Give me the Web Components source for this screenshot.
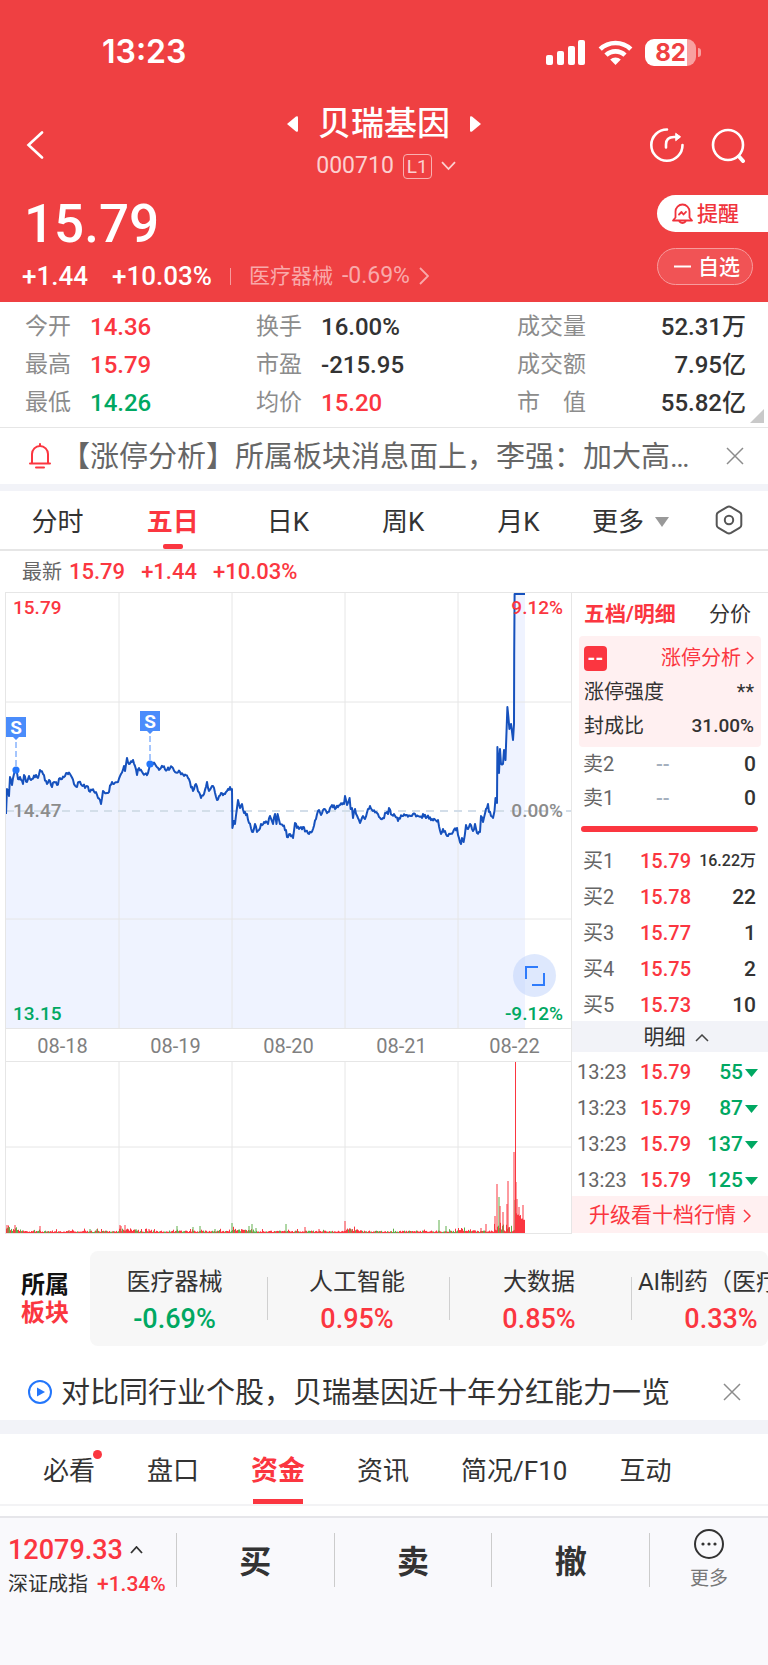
<!DOCTYPE html>
<html lang="zh-CN">
<head>
<meta charset="utf-8">
<meta name="viewport" content="width=device-width, initial-scale=1">
<title>贝瑞基因 000710</title>
<style>
html {
  background: #f9f9fc;
}
body {
  margin: 0;
  font-family: Roboto, "Noto Sans CJK SC", sans-serif;
  color: #333;
  --up: #fb3640;
  --down: #00a862;
  --line: #e6e6e6;
  --band: #f2f3f8;
  --muted: #8c8c8c;
}
</style>
</head>
<body>
<stock-page></stock-page>

<script>
// every element clones its template into an open shadow root
function define(name, html, setup) {
  const template = document.createElement('template');
  template.innerHTML = `
<style>
*, *::before { box-sizing: border-box; }
:host { display: block; }
button { all: unset; box-sizing: border-box; cursor: pointer; }
a { color: inherit; text-decoration: none; }
svg { display: block; flex: none; }
.up { color: var(--up); }
.down { color: var(--down); }
</style>` + html;

  customElements.define(name, class extends HTMLElement {
    constructor() {
      super();
      this.attachShadow({ mode: 'open' });
      this.shadowRoot.appendChild(template.content.cloneNode(true));
      if (setup) setup(this.shadowRoot, this);
    }
  });
}

/* ---------- status bar ---------- */
define('status-bar', `
<style>
:host {
  display: flex;
  justify-content: space-between;
  align-items: center;
  padding: 36px 72px 0 102px;
  font: 600 32px/32px Inter, sans-serif;
  color: #fff;
}
.icons { display: flex; align-items: center; gap: 12px; }
.battery {
  position: relative;
  width: 51px;
  height: 27px;
  border-radius: 9px;
  background: linear-gradient(90deg, #fff 42px, #f8a0a0 42px);
  color: #ef4042;
  font-size: 24px;
  font-weight: 700;
  line-height: 27px;
  text-align: center;
}
.battery::after {
  content: "";
  position: absolute;
  left: 53px;
  top: 9px;
  width: 3px;
  height: 9px;
  border-radius: 0 4px 4px 0;
  background: #f8a0a0;
}
</style>
<span>13:23</span>
<div class="icons">
  <svg width="40" height="25" viewBox="0 0 40 25" fill="#fff">
    <rect x="0" y="15" width="7" height="10" rx="2"/>
    <rect x="11" y="11" width="7" height="14" rx="2"/>
    <rect x="22" y="6" width="7" height="19" rx="2"/>
    <rect x="32" y="0" width="7" height="25" rx="2"/>
  </svg>
  <svg width="35" height="25" viewBox="0 0 35 25">
    <g fill="none" stroke="#fff" stroke-width="4.6">
      <path d="M2.2 9.2a22 22 0 0 1 30.6 0"/>
      <path d="M8 15.2a13.6 13.6 0 0 1 19 0"/>
    </g>
    <path d="M12.2 19.6a7.6 7.6 0 0 1 10.6 0L17.5 25z" fill="#fff"/>
  </svg>
  <div class="battery">82</div>
</div>`);

/* ---------- red header ---------- */
define('quote-header', `
<style>
:host { background: #ef4042; color: #fff; }
nav {
  display: grid;
  grid-template-columns: 1fr auto 1fr;
  align-items: center;
  padding: 36px 22px 0;
}
.back { padding: 4px 0 0 4px; }
.title { display: flex; align-items: center; justify-content: center; gap: 19px; }
h1 { margin: 0; font-size: 33px; line-height: 40px; font-weight: 500; }
.code {
  display: flex;
  align-items: center;
  justify-content: center;
  gap: 9px;
  margin-top: 6px;
  padding-left: 4px;
  font-size: 23px;
  line-height: 32px;
  color: #fcd0d0;
}
.level {
  border: 1px solid #f9b0b0;
  border-radius: 4px;
  padding: 0 3px;
  font-size: 19px;
  line-height: 23px;
}
.tools { display: flex; justify-content: flex-end; gap: 26px; padding-top: 3px; }
.quote { display: flex; justify-content: space-between; padding: 10px 0 6px 22px; }
.price { padding-left: 2px; font-size: 53px; line-height: 64px; font-weight: 500; }
.change { display: flex; align-items: center; font-size: 26px; line-height: 40px; font-weight: 500; }
.change span + span { margin-left: 24px; }
.change i { width: 1px; height: 17px; margin: 0 18px; background: #f79c9d; }
.change a {
  display: flex;
  align-items: center;
  gap: 9px;
  font-size: 21px;
  font-weight: 400;
  color: #f9a9aa;
}
.change b { font-weight: 400; font-size: 23px; }
.actions { display: flex; flex-direction: column; gap: 16px; padding-top: 3px; }
.actions button {
  display: flex;
  align-items: center;
  height: 37px;
  padding-bottom: 3px;
  font-size: 21px;
  font-weight: 500;
}
.remind {
  width: 111px;
  padding-left: 15px;
  gap: 4px;
  border-radius: 19px 0 0 19px;
  background: #fff;
  color: #f0333c;
}
.remind svg { margin-top: 2px; }
.pick {
  width: 96px;
  padding-left: 16px;
  gap: 7px;
  border: 1px solid #f79c9d;
  border-radius: 19px;
  background: #f15355;
}
.pick svg { margin-top: 3px; }
</style>
<status-bar></status-bar>
<nav>
  <button class="back" aria-label="返回">
    <svg width="18" height="28" viewBox="0 0 18 28" fill="none" stroke="#fff" stroke-width="2.6" stroke-linecap="round"><path d="M16 1.5 2.5 14 16 26.5"/></svg>
  </button>
  <div>
    <div class="title">
      <svg width="12" height="16" viewBox="0 0 12 16" fill="#fff"><path d="M0 8 9 .6q2-1 2 1v12.8q0 2-2 1z"/></svg>
      <h1>贝瑞基因</h1>
      <svg width="12" height="16" viewBox="0 0 12 16" fill="#fff"><path d="M12 8 3 .6q-2-1-2 1v12.8q0 2 2 1z"/></svg>
    </div>
    <div class="code">
      <span>000710</span><span class="level">L1</span>
      <svg width="15" height="10" viewBox="0 0 15 10" fill="none" stroke="#fcd0d0" stroke-width="1.8"><path d="M1 1.2 7.5 8 14 1.2"/></svg>
    </div>
  </div>
  <div class="tools">
    <button aria-label="分享">
      <svg width="36" height="36" viewBox="0 0 36 36" fill="none" stroke="#fff" stroke-width="2.6" stroke-linecap="round" stroke-linejoin="round">
        <path d="M18 2.5A15.6 15.6 0 1 0 33.5 18"/>
        <path d="M17 20.5v-3c0-5 3-7.5 8-7.5h5"/>
        <path d="M27 6.5 31.5 9.8 27 13.5z" fill="#fff" stroke-width="1"/>
      </svg>
    </button>
    <button aria-label="搜索">
      <svg width="35" height="36" viewBox="0 0 35 36" fill="none" stroke="#fff" stroke-linecap="round">
        <circle cx="17" cy="18" r="15" stroke-width="2.6"/>
        <path d="m28 29.5 4 4.5" stroke-width="4"/>
      </svg>
    </button>
  </div>
</nav>
<div class="quote">
  <div>
    <div class="price">15.79</div>
    <div class="change">
      <span>+1.44</span><span>+10.03%</span><i></i>
      <a href="#sector">医疗器械 <b>-0.69%</b>
        <svg width="10" height="18" viewBox="0 0 10 18" fill="none" stroke="#f9a9aa" stroke-width="1.8"><path d="m1 1 8 8-8 8"/></svg>
      </a>
    </div>
  </div>
  <div class="actions">
    <button class="remind">
      <svg width="21" height="21" viewBox="0 0 21 21" fill="none" stroke="#f0333c" stroke-width="1.8" stroke-linejoin="round" stroke-linecap="round">
        <path d="M3.5 14.5V8.5a7 7 0 0 1 14 0v6L20 17.5H1z"/>
        <path d="M7.5 18.5q3 3 6 0M7 11.5l2.5-2.5 2 2.5L14 8.8"/>
      </svg>提醒
    </button>
    <button class="pick">
      <svg width="17" height="3" viewBox="0 0 17 3"><path d="M0 1.5h17" stroke="#fff" stroke-width="2"/></svg>自选
    </button>
  </div>
</div>`);

/* ---------- key figures ---------- */
define('stat-item', `
<style>
:host { display: flex; font-size: 24px; line-height: 38px; font-weight: 500; }
.label { color: var(--muted); font-size: 23px; font-weight: 400; white-space: pre; margin-right: 19px; }
:host([end]) { justify-content: space-between; }
:host([tone="up"]) .value { color: var(--up); }
:host([tone="down"]) .value { color: var(--down); }
</style>
<span class="label"></span><span class="value"><slot></slot></span>`, (root, host) => {
  root.querySelector('.label').textContent = host.getAttribute('label');
});

define('quote-stats', `
<style>
:host {
  position: relative;
  display: grid;
  grid-template-columns: 231px 261px 1fr;
  padding: 6px 22px 5px 25px;
  border-bottom: 1px solid var(--line);
  background: #fff;
}
.more {
  position: absolute;
  right: 4px;
  bottom: 4px;
  width: 14px;
  height: 14px;
  background: #c9c9c9;
  clip-path: polygon(100% 0, 100% 100%, 0 100%);
}
</style>
<stat-item label="今开" tone="up">14.36</stat-item>
<stat-item label="换手">16.00%</stat-item>
<stat-item label="成交量" end>52.31万</stat-item>
<stat-item label="最高" tone="up">15.79</stat-item>
<stat-item label="市盈">-215.95</stat-item>
<stat-item label="成交额" end>7.95亿</stat-item>
<stat-item label="最低" tone="down">14.26</stat-item>
<stat-item label="均价" tone="up">15.20</stat-item>
<stat-item label="市　值" end>55.82亿</stat-item>
<button class="more" aria-label="展开"></button>`);

/* ---------- one line notice with a close button ---------- */
define('notice-bar', `
<style>
:host {
  display: flex;
  align-items: center;
  padding: 0 24px 0 28px;
  background: #fff;
  font-size: 29px;
}
a { flex: 1; min-width: 0; overflow: hidden; white-space: nowrap; line-height: 42px; margin-left: 9px; padding-top: 2px; }
</style>
<slot name="icon"></slot>
<a href="#notice"><slot></slot></a>
<button aria-label="关闭">
  <svg width="18" height="18" viewBox="0 0 18 18" fill="none" stroke="#8c8c8c" stroke-width="1.5"><path d="m1 1 16 16M17 1 1 17"/></svg>
</button>`);

/* ---------- chart period tabs ---------- */
define('period-tabs', `
<style>
:host {
  display: flex;
  align-items: center;
  height: 60px;
  border-bottom: 2px solid var(--line);
  background: #fff;
  font-size: 26px;
}
button { position: relative; flex: 0 0 15%; text-align: center; line-height: 54px; padding-top: 4px; }
button.on { color: var(--up); font-weight: 700; }
button.on::after {
  content: "";
  position: absolute;
  left: 50%;
  bottom: 0;
  width: 20px;
  height: 5px;
  margin-left: -10px;
  border-radius: 2px;
  background: var(--up);
}
button.more { display: flex; align-items: center; gap: 11px; flex: 1; padding-left: 16px; }
button.gear { flex: none; margin-right: 25px; padding: 0; }
</style>
<button>分时</button>
<button class="on">五日</button>
<button>日K</button>
<button>周K</button>
<button>月K</button>
<button class="more">更多
  <svg width="14" height="10" viewBox="0 0 14 10" fill="#999"><path d="M0 0h14L7 10z"/></svg>
</button>
<button class="gear" aria-label="设置">
  <svg width="28" height="30" viewBox="0 0 28 30" fill="none" stroke="#555" stroke-width="2" stroke-linejoin="round">
    <path d="M14 1.5q1 0 2 .6l8.500 5q1.8 1 1.8 3v9.800q0 2-1.8 3L16 27.9q-2 1.100-4 0l-8.500-5q-1.8-1-1.8-3v-9.800q0-2 1.8-3l8.500-5q1-.6 2-.6z"/>
    <circle cx="14" cy="15" r="4.2"/>
  </svg>
</button>`);

/* ---------- five day chart ---------- */

// price line: x, y pairs in the 565 x 435 pane
const PRICE = [
  [0,221],[1,196],[3,203],[4,184],[6,192],[8,181],[10,177],[12,186],[14,184],[17,191],[18,182],[21,189],[23,183],[26,186],
  [30,182],[32,185],[34,177],[37,181],[41,191],[43,187],[46,194],[48,189],[51,192],[54,185],[56,186],[61,180],[64,181],
  [68,191],[71,194],[73,189],[77,193],[81,193],[83,198],[86,197],[90,199],[92,205],[95,211],[97,198],[102,200],[106,189],
  [112,189],[115,181],[118,173],[119,178],[121,165],[123,171],[127,167],[129,173],[131,182],[133,175],[139,181],[142,180],
  [144,171],[149,171],[154,176],[157,174],[161,177],[166,174],[169,179],[174,179],[178,183],[182,185],[187,198],[190,191],
  [195,205],[198,201],[201,189],[203,198],[207,193],[211,207],[215,200],[219,201],[222,196],[226,196],[226.4,235],[228,228],
  [229,231],[231,215],[232,207],[234,215],[236,211],[238,220],[241,221],[243,230],[247,239],[249,231],[251,239],[253,237],
  [255,231],[258,229],[262,231],[264,223],[267,231],[269,221],[270.5,231],[271.6,221],[274,231],[277,233],[280,237],[281,244],
  [284,241],[287,245],[289,230],[293,236],[297,234],[300,238],[303,241],[307,236],[310,226],[313,217],[315,222],[318,216],
  [322,219],[326,212],[330,215],[334,212],[338,211],[339,203],[341,212],[343.6,205],[344.6,216],[346,215],[347,225],[349,216],
  [352,225],[354,230],[357,223],[359,226],[362,216],[364,213],[367,218],[371,220],[373,224],[377,225],[380,220],[382,221],
  [383,215],[386,222],[388,221],[392,228],[396,223],[400,222],[404,223],[407,221],[412,223],[416,225],[417,221],[421,224],
  [426,226],[432,227],[435,241],[437,236],[441,243],[444,241],[447,239],[451,235],[453,245],[455,251],[456,245],[457.6,249],
  [460,232],[462,236],[464,231],[467,238],[469,231],[471,240],[474,239],[475,223],[477,229],[480,216],[482,211],[483,219],
  [487,225],[488.5,218],[489.5,205],[491,210],[491.4,154],[493,180],[494,156],[495,171],[497,171],[498,157],[499.5,167],
  [501.4,114],[503.4,136],[505,131],[507,147],[508,131],[508.2,62],[508.6,1],[519,1]
];

// volume spikes: x, height, 1 for a falling bar
const SPIKES = [
  [1,9],[3,7,1],[9,9],[34,8],[63,4],[84,5,1],[91,5,1],[114,9],[115,8],[119,9],[130,5,1],[143,5],[171,8,1],[187,7,1],
  [194,8,1],[209,5,1],[226,11,1],[243,8,1],[246,10,1],[250,6,1],[280,10,1],[299,7],[313,5],[339,13],[345,5,1],[433,14,1],
  [440,8,1],[475,6],[480,10],[489,18],[491,50],[493,37,1],[494,28],[497,22],[501,30],[502,53],[508,82],[509,34,1],
  [509.5,172],[510,52],[511,35],[513,27],[517,29]
];

// small repeatable noise, so the chart is drawn the same every time
function noise(seed) {
  return () => {
    seed = (seed * 16807) % 2147483647;
    return seed / 2147483647;
  };
}

function pricePath() {
  const rand = noise(77);
  let d = `M${PRICE[0]}`;
  for (let i = 1; i < PRICE.length; i++) {
    const [ax, ay] = PRICE[i - 1];
    const [bx, by] = PRICE[i];
    if (bx - ax >= 2 && by > 1) {
      const steps = Math.floor(bx - ax);
      for (let s = 1; s < steps; s++) {
        const t = s / steps;
        d += `L${(ax + (bx - ax) * t).toFixed(1)} ${(ay + (by - ay) * t + (rand() - 0.5) * 4).toFixed(1)}`;
      }
    }
    d += `L${bx} ${by}`;
  }
  return d;
}

function volumePaths() {
  const rand = noise(4242);
  const paths = ['', ''];
  for (let x = 0; x < 519; x++) {
    const open = x % 113;
    let h = 2 + rand() * 1.5 + (rand() > 0.92 ? 2 : 0);
    if (open < 20) h += (20 - open) / 20 * 5 * rand();
    if (x > 487) h += rand() * 8;
    if (x > 509) h = 20 - (x - 510) + rand() * 3;
    const fall = x < 509 && rand() > 0.72 ? 1 : 0;
    paths[fall] += `M${x + 0.5} 172v-${h.toFixed(1)}`;
  }
  const spikes = ['', ''];
  for (const [x, h, fall] of SPIKES) spikes[fall ? 1 : 0] += `M${x} 172v-${h}`;
  return { bars: paths, spikes };
}

define('quote-chart', `
<style>
:host { font-weight: 500; }
.pane { position: relative; border: solid var(--line); border-width: 1px 0 1px 1px; }
.pane svg { width: 100%; height: auto; overflow: hidden; }
.tag { position: absolute; font-size: 19px; line-height: 20px; color: var(--muted); }
.tl { left: 7px; top: 5px; }
.tr { right: 8px; top: 5px; }
.ml { left: 7px; top: 50%; margin-top: -10px; }
.mr { right: 8px; top: 50%; margin-top: -10px; }
.bl { left: 7px; bottom: 4px; }
.br { right: 8px; bottom: 4px; }
.tag.up { color: var(--up); }
.tag.down { color: var(--down); }
.days { display: grid; grid-template-columns: repeat(5, 1fr); border-left: 1px solid var(--line); }
.days span { text-align: center; font-size: 20px; line-height: 32px; padding-top: 1px; margin-bottom: -1px; color: #808080; font-weight: 400; }
.full {
  position: absolute;
  right: 15px;
  bottom: 31px;
  width: 43px;
  height: 43px;
  border-radius: 50%;
  background: rgba(190, 210, 252, .5);
  display: flex;
  align-items: center;
  justify-content: center;
}
.full svg { width: 20px; height: 20px; }
text { font: 700 19px Roboto, sans-serif; fill: #fff; text-anchor: middle; }
</style>
<div class="pane">
  <svg viewBox="0 0 565 435">
    <path class="area" fill="#eff3ff"/>
    <path d="M113 0v436M226 0v436M339 0v436M452 0v436M0 109h565M0 326h565" fill="none" stroke="#e6e6e6"/>
    <path d="M0 218h565" fill="none" stroke="#d3dee9" stroke-width="2" stroke-dasharray="8 6"/>
    <path class="line" fill="none" stroke="#1651bd" stroke-width="2" stroke-linejoin="round"/>
    <g>
      <path d="M0 124h20v20h-7l-3 3-3-3H0z" fill="#4a8cfb"/>
      <path d="M10 149v24" stroke="#4a8cfb" stroke-dasharray="6 3"/>
      <circle cx="10" cy="177" r="3.6" fill="#2376fb"/>
      <text x="10" y="141">S</text>
    </g>
    <g>
      <path d="M134 118h20v20h-7l-3 3-3-3h-7z" fill="#4a8cfb"/>
      <path d="M144 143v24" stroke="#4a8cfb" stroke-dasharray="6 3"/>
      <circle cx="144" cy="171" r="3.6" fill="#2376fb"/>
      <text x="144" y="135">S</text>
    </g>
  </svg>
  <span class="tag tl up">15.79</span>
  <span class="tag tr up">9.12%</span>
  <span class="tag ml">14.47</span>
  <span class="tag mr">0.00%</span>
  <span class="tag bl down">13.15</span>
  <span class="tag br down">-9.12%</span>
  <button class="full" aria-label="全屏">
    <svg viewBox="0 0 20 20" fill="none" stroke="#2f7bfb" stroke-width="2"><path d="M1 13V1h12M7 19h12V7"/></svg>
  </button>
</div>
<div class="days">
  <span>08-18</span><span>08-19</span><span>08-20</span><span>08-21</span><span>08-22</span>
</div>
<div class="pane">
  <svg viewBox="0 0 565 171">
    <path d="M113 0v172M226 0v172M339 0v172M452 0v172M0 85h565" fill="none" stroke="#e6e6e6"/>
    <path class="v0" stroke="#fb3640"/>
    <path class="v1" stroke="#5fae4a"/>
    <path class="s1" stroke="#5fae4a"/>
    <path class="s0" stroke="#fb3640"/>
  </svg>
</div>`, root => {
  const d = pricePath();
  root.querySelector('.line').setAttribute('d', d);
  root.querySelector('.area').setAttribute('d', d + 'V436H0z');
  const { bars, spikes } = volumePaths();
  bars.forEach((path, i) => root.querySelector('.v' + i).setAttribute('d', path));
  spikes.forEach((path, i) => root.querySelector('.s' + i).setAttribute('d', path));
});

/* ---------- order book ---------- */
define('order-book', `
<style>
:host { border: solid var(--line); border-width: 1px 0 0 1px; font-size: 20px; }
.tabs { display: flex; justify-content: space-between; padding: 0 17px 0 12px; font-size: 21px; line-height: 43px; }
.tabs .on { color: var(--up); font-weight: 700; }
.limit { margin: 0 7px; padding: 5px 7px 4px 5px; border-radius: 4px; background: #fff0f1; }
.limit div, .limit a { display: flex; align-items: center; justify-content: space-between; line-height: 34px; }
.limit a { color: var(--up); gap: 5px; }
.limit b { font-weight: 500; font-size: 19px; }
.badge { width: 23px; line-height: 25px; margin-right: auto; border-radius: 4px; background: var(--up); color: #fff; text-align: center; font-weight: 700; }
table { width: 100%; border-collapse: collapse; table-layout: fixed; }
th, td { padding: 4px 0 0; text-align: left; font-weight: 500; line-height: 32px; white-space: nowrap; }
.sell th, .sell td { padding-top: 0; line-height: 34px; }
th { width: 68px; padding-left: 11px; color: #666; font-weight: 400; }
td.none { padding-left: 16px; color: #a5b0be; }
td:last-child { width: 74px; padding-right: 12px; text-align: right; font-size: 21px; }
td.small:last-child { font-size: 16px; }
.ratio { height: 6px; margin: 11px 10px 9px 9px; border-radius: 3px; background: var(--up); }
.toggle { display: flex; width: 100%; padding: 2px 0 0 12px; align-items: center; justify-content: center; gap: 9px; background: var(--band); font-size: 21px; line-height: 29px; }
.trades th { padding-left: 5px; }
.trades td:last-child { padding-right: 10px; }
.trades td svg { display: inline-block; margin-left: 2px; vertical-align: 2px; }
.upgrade { display: flex; align-items: center; justify-content: center; gap: 7px; padding-top: 2px; background: #fff0f1; color: var(--up); font-size: 21px; line-height: 35px; }
</style>
<div class="tabs"><button class="on">五档/明细</button><button>分价</button></div>
<div class="limit">
  <a href="#limit"><span class="badge">--</span>涨停分析
    <svg width="8" height="14" viewBox="0 0 8 14" fill="none" stroke="#fb3640" stroke-width="1.5"><path d="m1 1 6 6-6 6"/></svg>
  </a>
  <div><span>涨停强度</span><span>**</span></div>
  <div><span>封成比</span><b>31.00%</b></div>
</div>
<table class="sell">
  <tr><th>卖2</th><td class="none">--</td><td>0</td></tr>
  <tr><th>卖1</th><td class="none">--</td><td>0</td></tr>
</table>
<div class="ratio"></div>
<table class="buy">
  <tr><th>买1</th><td class="up">15.79</td><td class="small">16.22万</td></tr>
  <tr><th>买2</th><td class="up">15.78</td><td>22</td></tr>
  <tr><th>买3</th><td class="up">15.77</td><td>1</td></tr>
  <tr><th>买4</th><td class="up">15.75</td><td>2</td></tr>
  <tr><th>买5</th><td class="up">15.73</td><td>10</td></tr>
</table>
<button class="toggle">明细
  <svg width="14" height="8" viewBox="0 0 14 8" fill="none" stroke="#444" stroke-width="1.5"><path d="m1 7 6-6 6 6"/></svg>
</button>
<table class="trades"></table>
<a class="upgrade" href="#level2">升级看十档行情
  <svg width="8" height="14" viewBox="0 0 8 14" fill="none" stroke="#fb3640" stroke-width="1.5"><path d="m1 1 6 6-6 6"/></svg>
</a>`, root => {
  root.querySelector('.trades').innerHTML = [55, 87, 137, 125].map(n => `
  <tr><th>13:23</th><td class="up">15.79</td><td class="down">${n}<svg width="13" height="8" viewBox="0 0 13 8" fill="#00a862"><path d="M0 0h13L6.5 8z"/></svg></td></tr>`).join('');
});

/* ---------- related sectors ---------- */
define('sector-strip', `
<style>
:host { display: flex; align-items: center; padding: 17px 0; background: #fff; }
h2 { flex: 0 0 90px; margin: 0; padding-left: 21px; font-size: 24px; line-height: 28px; font-weight: 700; color: #111; }
h2 span { display: block; }
.list { display: flex; flex: 1; min-width: 0; overflow: hidden; border-radius: 8px; background: #f7f7f7; padding: 13px 0 8px; }
a {
  position: relative;
  flex: 0 0 182px;
  display: flex;
  flex-direction: column;
  align-items: center;
  padding-right: 2px;
  font-size: 24px;
  line-height: 36px;
  white-space: nowrap;
}
a:first-child { flex-basis: 177px; padding-right: 8px; }
a + a::before { content: ""; position: absolute; left: 0; top: 13px; width: 1px; height: 43px; background: #d0d0d0; }
b { font-size: 27px; line-height: 38px; font-weight: 500; }
</style>
<h2><span>所属</span><span class="up">板块</span></h2>
<div class="list">
  <a href="#s1">医疗器械<b class="down">-0.69%</b></a>
  <a href="#s2">人工智能<b class="up">0.95%</b></a>
  <a href="#s3">大数据<b class="up">0.85%</b></a>
  <a href="#s4">AI制药（医疗）<b class="up">0.33%</b></a>
</div>`);

/* ---------- section tabs ---------- */
define('section-tabs', `
<style>
:host { display: flex; padding-left: 17px; background: #fff; border-bottom: 2px solid #f3f3f5; font-size: 26px; }
button { position: relative; padding: 4px 26px 0; line-height: 66px; }
.on { color: var(--up); font-size: 27px; font-weight: 700; }
.on::after { content: ""; position: absolute; left: 28px; right: 28px; bottom: 0; height: 5px; background: var(--up); }
.dot::after { content: ""; position: absolute; right: 19px; top: 16px; width: 9px; height: 9px; border-radius: 50%; background: var(--up); }
</style>
<button class="dot">必看</button>
<button>盘口</button>
<button class="on">资金</button>
<button>资讯</button>
<button>简况/F10</button>
<button>互动</button>`);

/* ---------- bottom trade bar ---------- */
define('trade-bar', `
<style>
:host { display: flex; border-top: 2px solid #e6e6ea; background: #f9f9fc; padding: 15px 0 78px; }
.index { flex: 0 0 176px; padding-left: 8px; white-space: nowrap; }
.index div { display: flex; align-items: center; gap: 9px; font-size: 21px; line-height: 34px; }
.index .value { gap: 7px; font-size: 27px; font-weight: 500; line-height: 34px; }
.index small { font-size: 20px; }
.index b { font-weight: 500; }
.trade, .more { border-left: 1px solid #ccc; height: 54px; text-align: center; }
.trade { flex: 1; font-size: 32px; line-height: 58px; font-weight: 700; }
.more { display: flex; flex: 0 0 119px; flex-direction: column; align-items: center; font-size: 19px; color: #777; line-height: 38px; }
.more svg { margin-top: -5px; }
</style>
<div class="index">
  <div class="value up">12079.33
    <svg width="13" height="8" viewBox="0 0 13 8" fill="none" stroke="#333" stroke-width="1.8"><path d="m1 7 5.5-6L12 7"/></svg>
  </div>
  <div><small>深证成指</small><b class="up">+1.34%</b></div>
</div>
<button class="trade">买</button>
<button class="trade">卖</button>
<button class="trade">撤</button>
<button class="more">
  <svg width="32" height="32" viewBox="0 0 32 32" fill="#333">
    <circle cx="16" cy="16" r="14" fill="none" stroke="#333" stroke-width="2"/>
    <circle cx="10" cy="16" r="1.6"/><circle cx="16" cy="16" r="1.6"/><circle cx="22" cy="16" r="1.6"/>
  </svg>更多
</button>`);

/* ---------- page ---------- */
define('stock-page', `
<style>
.alert { height: 56px; color: #666; }
.promo { height: 57px; padding-right: 27px; }
.band { height: 7px; background: var(--band); }
.band.wide { height: 14px; }
.latest { display: flex; gap: 16px; padding-left: 22px; background: #fff; font-size: 22px; line-height: 42px; height: 41px; font-weight: 500; }
.latest small { margin-right: -9px; font-size: 20px; font-weight: 400; color: #666; }
.market { display: grid; grid-template-columns: minmax(0, 1fr) 197px; padding-left: 5px; background: #fff; }
.gap { height: 10px; background: #fff; }
</style>
<quote-header></quote-header>
<quote-stats></quote-stats>
<notice-bar class="alert">
  <svg slot="icon" width="24" height="26" viewBox="0 0 24 26" fill="none" stroke="#fb3640" stroke-width="2" stroke-linecap="round" stroke-linejoin="round">
    <path d="M12 1v2M4 20V11a8 8 0 0 1 16 0v9M2 20.5h20M8 24.5h8"/>
  </svg>【涨停分析】所属板块消息面上，李强：加大高…
</notice-bar>
<div class="band"></div>
<period-tabs></period-tabs>
<div class="latest up"><small>最新</small><span>15.79</span><span>+1.44</span><span>+10.03%</span></div>
<div class="market">
  <quote-chart></quote-chart>
  <order-book></order-book>
</div>
<sector-strip></sector-strip>
<notice-bar class="promo">
  <svg slot="icon" width="24" height="24" viewBox="0 0 24 24" fill="#2376fb">
    <circle cx="12" cy="12" r="11" fill="none" stroke="#2376fb" stroke-width="2"/>
    <path d="M9 7.5 17 12l-8 4.5z"/>
  </svg>对比同行业个股，贝瑞基因近十年分红能力一览
</notice-bar>
<div class="band wide"></div>
<section-tabs></section-tabs>
<div class="gap"></div>
<trade-bar></trade-bar>`);
</script>
</body>
</html>
